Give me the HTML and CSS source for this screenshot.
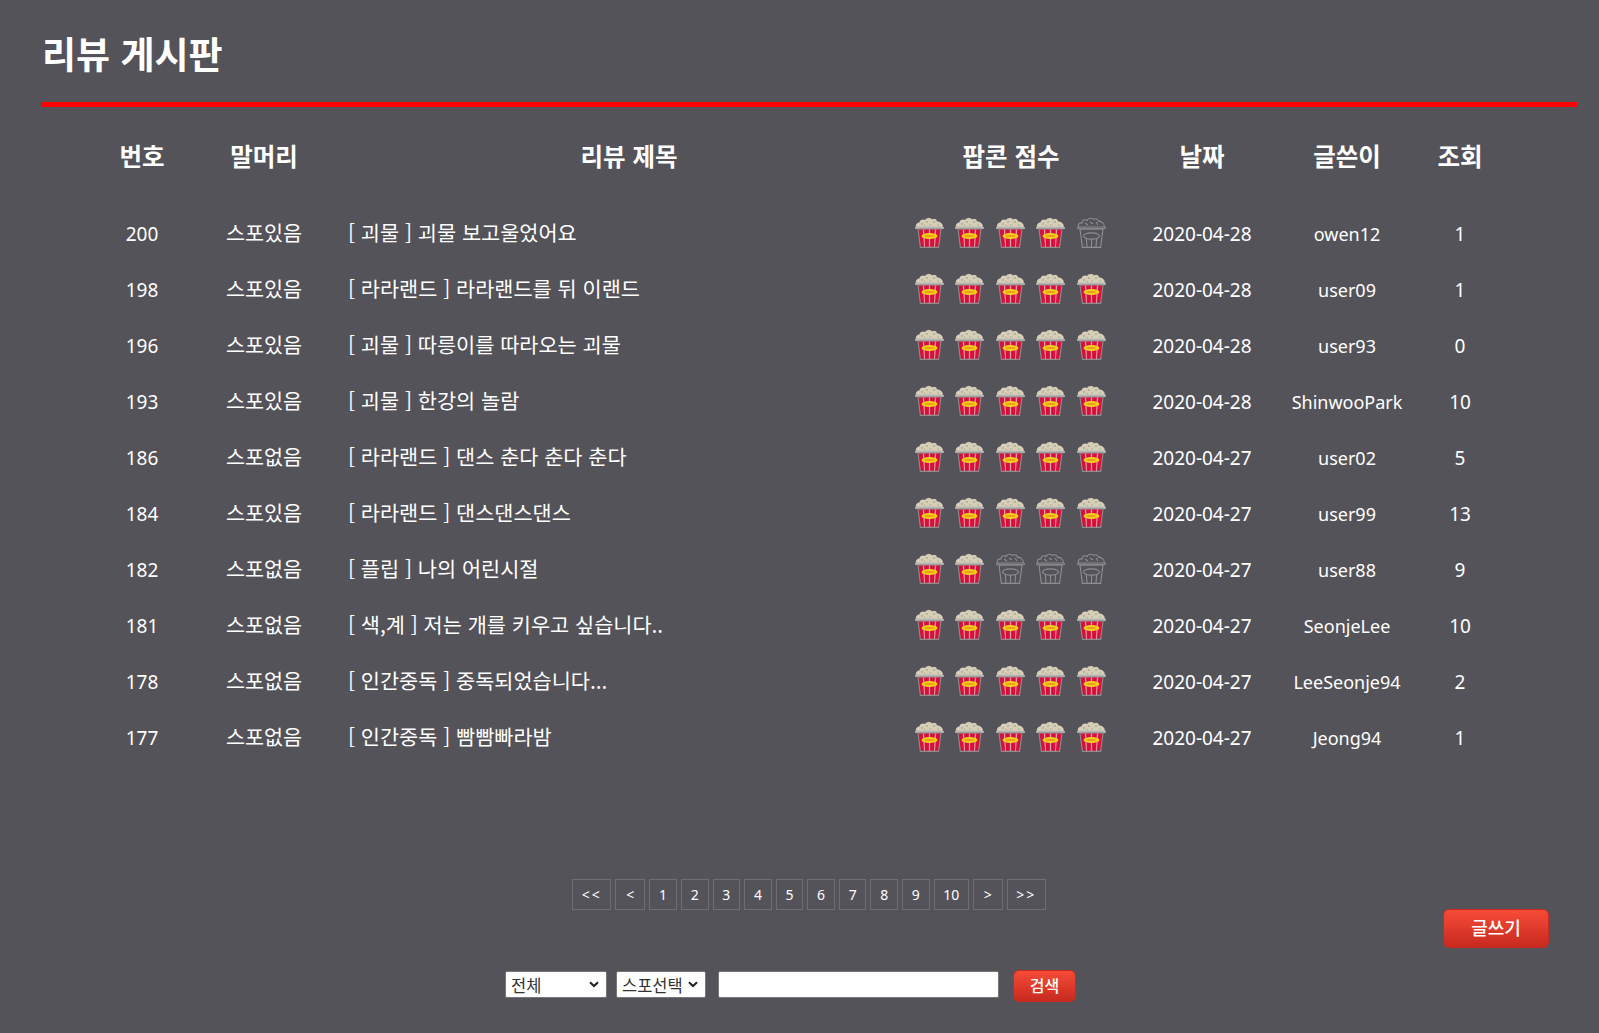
FILE: index.html
```html
<!DOCTYPE html>
<html lang="ko">
<head>
<meta charset="utf-8">
<title>리뷰 게시판</title>
<link rel="stylesheet" href="styles.css">
</head>
<body>
<svg class="defs" width="0" height="0" aria-hidden="true">
  <defs>
    <symbol id="pop-full" viewBox="0 0 29 31">
      <path d="M1 10.5 C0.5 8 1.5 5.5 4.5 5.5 C4.5 3 8 1.5 10 3 C11 0.6 15.5 0.3 17 2.5 C19 1 22 2 22 4.5 C25 4 28 6.5 28 10.5 Z" fill="#d6cfb8"/>
      <g fill="#a9a594"><circle cx="7" cy="7" r=".9"/><circle cx="12" cy="5" r=".9"/><circle cx="15" cy="8" r=".8"/><circle cx="19" cy="5" r=".9"/><circle cx="23" cy="8" r=".8"/><circle cx="10" cy="8.5" r=".7"/></g>
      <rect x="0" y="9.8" width="29" height="2.2" rx="1" fill="#b5b4b1"/>
      <path d="M3 12 H26 L23.6 30.4 H5.4 Z" fill="#d90f3b" stroke="#8e8c8d" stroke-width="1.1"/>
      <g fill="#dc9ea4"><path d="M7.8 12.5 H9.2 L10 30 H9 Z"/><path d="M13.8 12.5 H15.2 L15.1 30 H13.9 Z"/><path d="M19.8 12.5 H21.2 L20 30 H19 Z"/></g>
      <ellipse cx="14.5" cy="19" rx="8" ry="3" fill="#f0d01c"/>
      <ellipse cx="14.5" cy="19" rx="5" ry=".9" fill="#ee9a18"/>
    </symbol>
    <symbol id="pop-empty" viewBox="0 0 29 31">
      <g fill="none" stroke="#8f8e90" stroke-width="1.1">
        <path d="M1.5 10 C0.5 7.5 2.5 5.5 5 6 C5 3 8 2 10 3.5 C11 0.8 15 0.5 16.5 2.5 C18.5 1 21.5 2 21.5 4.5 C24 4 27.5 6 27.5 10"/>
        <path d="M8 6 L11 8 M13 5 L16 7 M19 5 L21 8"/>
        <rect x=".6" y="10" width="27.8" height="1.8" rx=".9"/>
        <path d="M3 12 H26 L23.6 30.4 H5.4 Z"/>
        <ellipse cx="14.5" cy="19" rx="8" ry="3.1"/>
        <path d="M9.4 22 L10 30 M19.6 22 L19 30 M14.5 22.4 V30"/>
      </g>
    </symbol>
  </defs>
</svg>

<header class="head">
  <h1 class="title">리뷰 게시판</h1>
</header>

<main class="board">
  <table class="list">
    <colgroup>
      <col class="c-no"><col class="c-tag"><col class="c-title"><col class="c-score"><col class="c-date"><col class="c-user"><col class="c-view">
    </colgroup>
    <thead>
      <tr><th>번호</th><th>말머리</th><th class="th-title">리뷰 제목</th><th>팝콘 점수</th><th>날짜</th><th>글쓴이</th><th>조회</th></tr>
    </thead>
    <tbody>
      <tr><td class="num">200</td><td class="tag">스포있음</td><td class="subject">[ 괴물 ] 괴물 보고울었어요</td><td><div class="stars"><svg class="pop"><use href="#pop-full"/></svg><svg class="pop"><use href="#pop-full"/></svg><svg class="pop"><use href="#pop-full"/></svg><svg class="pop"><use href="#pop-full"/></svg><svg class="pop"><use href="#pop-empty"/></svg></div></td><td class="num">2020-04-28</td><td class="num who">owen12</td><td class="num">1</td></tr>
      <tr><td class="num">198</td><td class="tag">스포있음</td><td class="subject">[ 라라랜드 ] 라라랜드를 뒤 이랜드</td><td><div class="stars"><svg class="pop"><use href="#pop-full"/></svg><svg class="pop"><use href="#pop-full"/></svg><svg class="pop"><use href="#pop-full"/></svg><svg class="pop"><use href="#pop-full"/></svg><svg class="pop"><use href="#pop-full"/></svg></div></td><td class="num">2020-04-28</td><td class="num who">user09</td><td class="num">1</td></tr>
      <tr><td class="num">196</td><td class="tag">스포있음</td><td class="subject">[ 괴물 ] 따릉이를 따라오는 괴물</td><td><div class="stars"><svg class="pop"><use href="#pop-full"/></svg><svg class="pop"><use href="#pop-full"/></svg><svg class="pop"><use href="#pop-full"/></svg><svg class="pop"><use href="#pop-full"/></svg><svg class="pop"><use href="#pop-full"/></svg></div></td><td class="num">2020-04-28</td><td class="num who">user93</td><td class="num">0</td></tr>
      <tr><td class="num">193</td><td class="tag">스포있음</td><td class="subject">[ 괴물 ] 한강의 놀람</td><td><div class="stars"><svg class="pop"><use href="#pop-full"/></svg><svg class="pop"><use href="#pop-full"/></svg><svg class="pop"><use href="#pop-full"/></svg><svg class="pop"><use href="#pop-full"/></svg><svg class="pop"><use href="#pop-full"/></svg></div></td><td class="num">2020-04-28</td><td class="num who">ShinwooPark</td><td class="num">10</td></tr>
      <tr><td class="num">186</td><td class="tag">스포없음</td><td class="subject">[ 라라랜드 ] 댄스 춘다 춘다 춘다</td><td><div class="stars"><svg class="pop"><use href="#pop-full"/></svg><svg class="pop"><use href="#pop-full"/></svg><svg class="pop"><use href="#pop-full"/></svg><svg class="pop"><use href="#pop-full"/></svg><svg class="pop"><use href="#pop-full"/></svg></div></td><td class="num">2020-04-27</td><td class="num who">user02</td><td class="num">5</td></tr>
      <tr><td class="num">184</td><td class="tag">스포있음</td><td class="subject">[ 라라랜드 ] 댄스댄스댄스</td><td><div class="stars"><svg class="pop"><use href="#pop-full"/></svg><svg class="pop"><use href="#pop-full"/></svg><svg class="pop"><use href="#pop-full"/></svg><svg class="pop"><use href="#pop-full"/></svg><svg class="pop"><use href="#pop-full"/></svg></div></td><td class="num">2020-04-27</td><td class="num who">user99</td><td class="num">13</td></tr>
      <tr><td class="num">182</td><td class="tag">스포없음</td><td class="subject">[ 플립 ] 나의 어린시절</td><td><div class="stars"><svg class="pop"><use href="#pop-full"/></svg><svg class="pop"><use href="#pop-full"/></svg><svg class="pop"><use href="#pop-empty"/></svg><svg class="pop"><use href="#pop-empty"/></svg><svg class="pop"><use href="#pop-empty"/></svg></div></td><td class="num">2020-04-27</td><td class="num who">user88</td><td class="num">9</td></tr>
      <tr><td class="num">181</td><td class="tag">스포없음</td><td class="subject">[ 색,계 ] 저는 개를 키우고 싶습니다..</td><td><div class="stars"><svg class="pop"><use href="#pop-full"/></svg><svg class="pop"><use href="#pop-full"/></svg><svg class="pop"><use href="#pop-full"/></svg><svg class="pop"><use href="#pop-full"/></svg><svg class="pop"><use href="#pop-full"/></svg></div></td><td class="num">2020-04-27</td><td class="num who">SeonjeLee</td><td class="num">10</td></tr>
      <tr><td class="num">178</td><td class="tag">스포없음</td><td class="subject">[ 인간중독 ] 중독되었습니다...</td><td><div class="stars"><svg class="pop"><use href="#pop-full"/></svg><svg class="pop"><use href="#pop-full"/></svg><svg class="pop"><use href="#pop-full"/></svg><svg class="pop"><use href="#pop-full"/></svg><svg class="pop"><use href="#pop-full"/></svg></div></td><td class="num">2020-04-27</td><td class="num who">LeeSeonje94</td><td class="num">2</td></tr>
      <tr><td class="num">177</td><td class="tag">스포없음</td><td class="subject">[ 인간중독 ] 빰빰빠라밤</td><td><div class="stars"><svg class="pop"><use href="#pop-full"/></svg><svg class="pop"><use href="#pop-full"/></svg><svg class="pop"><use href="#pop-full"/></svg><svg class="pop"><use href="#pop-full"/></svg><svg class="pop"><use href="#pop-full"/></svg></div></td><td class="num">2020-04-27</td><td class="num who">Jeong94</td><td class="num">1</td></tr>
    </tbody>
  </table>

  <nav class="pager">
    <a class="page wide">&lt;&lt;</a>
    <a class="page mid">&lt;</a>
    <a class="page">1</a><a class="page">2</a><a class="page">3</a><a class="page">4</a><a class="page">5</a><a class="page">6</a><a class="page">7</a><a class="page">8</a><a class="page">9</a>
    <a class="page ten">10</a>
    <a class="page mid">&gt;</a>
    <a class="page wide">&gt;&gt;</a>
  </nav>

  <div class="actions">
    <button class="btn write" type="button">글쓰기</button>
  </div>

  <form class="search">
    <select class="sel sel-all"><option>전체</option></select>
    <select class="sel sel-spo"><option>스포선택</option></select>
    <input class="query" type="text">
    <button class="btn find" type="button">검색</button>
  </form>
</main>
</body>
</html>
```

FILE: styles.css
```css
* { box-sizing: border-box; }

html, body { height: 100%; }

body {
  margin: 0;
  background: #545359;
  color: #fff;
  font-family: "Noto Sans", "Noto Sans CJK KR", sans-serif;
  overflow: hidden;
}

.defs { display: block; height: 0; }

.head {
  margin: 0 22px 0 41px;
  height: 107px;
  padding: 27px 0 0 1px;
  border-bottom: 5px solid #f00;
}

.title {
  margin: 0;
  font-family: "Noto Sans CJK KR", sans-serif;
  font-size: 37px;
  line-height: 52px;
  font-weight: 700;
}

.list {
  width: 1432px;
  margin: 23px 0 0 85px;
  border-collapse: collapse;
  table-layout: fixed;
}

.c-no { width: 114px; }
.c-tag { width: 130px; }
.c-title { width: 580px; }
.c-score { width: 204px; }
.c-date { width: 178px; }
.c-user { width: 112px; }
.c-view { width: 114px; }

th {
  height: 50px;
  padding: 0;
  font-family: "Noto Sans CJK KR", sans-serif;
  font-size: 24.5px;
  font-weight: 700;
  text-align: center;
}

.th-title { padding-left: 20px; }

.list thead::after { content: ""; display: table-row; height: 24px; }

td {
  height: 56px;
  padding: 0;
  text-align: center;
  white-space: nowrap;
}

.num { font-size: 19px; padding-top: 3px; }

.who { font-size: 18px; }

.tag {
  font-family: "Noto Sans CJK KR", sans-serif;
  font-size: 20.7px;
}

.subject {
  padding-left: 19px;
  text-align: left;
  font-family: "Noto Sans CJK KR", sans-serif;
  font-size: 20.8px;
}

.stars {
  display: flex;
  justify-content: center;
  gap: 11.5px;
  padding-right: 2px;
}

.pop {
  display: block;
  width: 29px;
  height: 31px;
  flex: none;
}

.pager {
  display: flex;
  justify-content: center;
  gap: 4px;
  width: 1536px;
  height: 30px;
  margin: 115px 0 0 41px;
}

.page {
  display: flex;
  align-items: center;
  justify-content: center;
  width: 27.6px;
  height: 31px;
  border: 1px solid #6f6f70;
  color: #fff;
  font-size: 14px;
}

.page.wide { width: 39px; letter-spacing: 2px; }
.page.mid { width: 30px; }
.page.ten { width: 35px; }

.actions {
  display: flex;
  justify-content: flex-end;
  padding-right: 50px;
}

.btn {
  border: 1px solid #c9281e;
  border-radius: 6px;
  background: linear-gradient(#f64b38, #c82a1f);
  color: #fff;
  font-family: "Noto Sans CJK KR", sans-serif;
  font-weight: 500;
  padding: 0;
}

.write {
  width: 106px;
  height: 39px;
  padding-bottom: 4px;
  font-size: 18px;
}

.search {
  display: flex;
  align-items: flex-start;
  margin: 22px 0 0 505px;
}

.sel {
  appearance: none;
  height: 27px;
  margin-top: 1px;
  border: 1px solid #777;
  border-radius: 2px;
  background: #fff url("data:image/svg+xml,%3Csvg xmlns='http://www.w3.org/2000/svg' width='10' height='7'%3E%3Cpath d='M1 1.2 L5 5 L9 1.2' fill='none' stroke='%23222' stroke-width='2'/%3E%3C/svg%3E") no-repeat right 7px center;
  color: #333;
  font-family: "Noto Sans CJK KR", sans-serif;
  font-size: 16.5px;
  padding: 0 0 0 5px;
}

.sel-all { width: 102px; margin-right: 9px; }
.sel-spo { width: 90px; margin-right: 12px; }

.query {
  width: 281px;
  height: 27px;
  margin: 1px 14px 0 0;
  border: 1px solid #777;
  border-radius: 2px;
  background: #fff;
}

.find {
  width: 63px;
  height: 32px;
  padding-bottom: 2px;
  font-size: 16px;
}
```
